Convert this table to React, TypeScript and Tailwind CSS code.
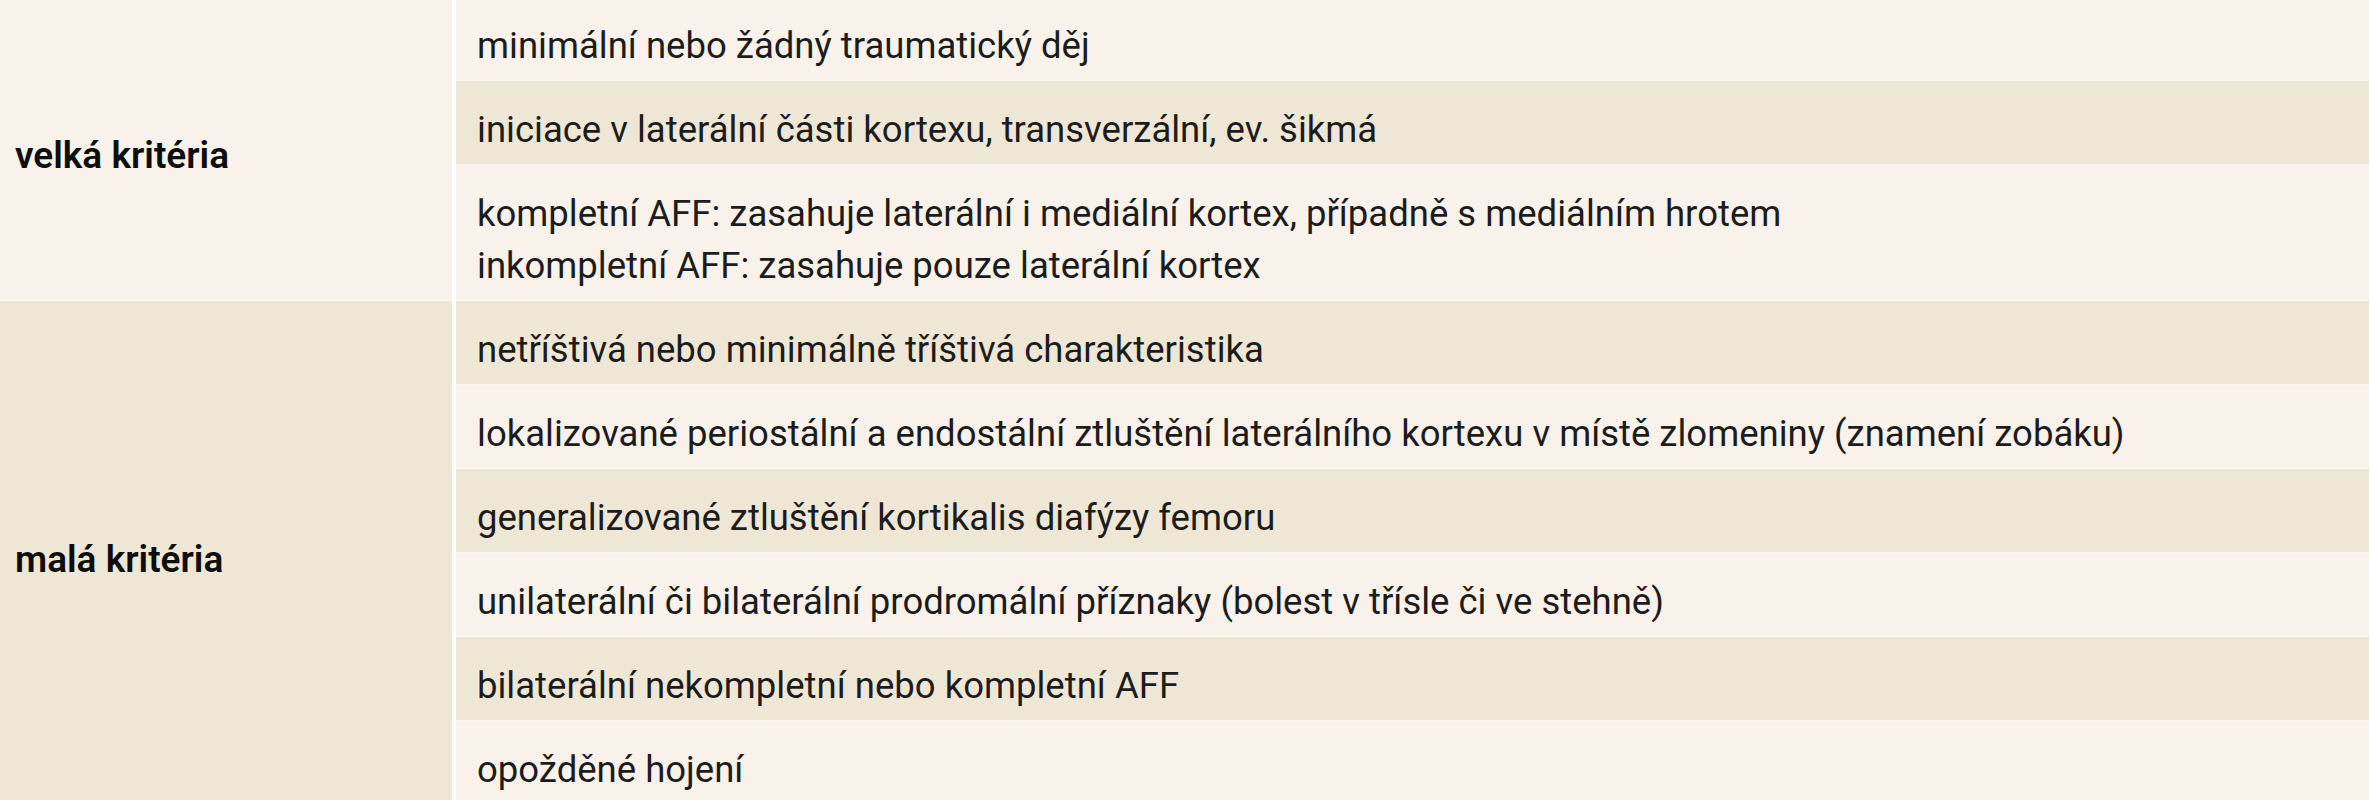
import React from "react";

const light = "bg-[#f8f2ea]";
const dark = "bg-[#efe7d6]";

function Row({ children, tone }: { children: React.ReactNode; tone: "l" | "d" }) {
  return (
    <div
      className={`${tone === "l" ? "bg-[#f8f2ea]" : "bg-[#efe7d6]"} pl-[21px] pr-6 pt-[24px] pb-[8px] leading-[52px] text-[36.5px] text-[#1c1c1c] shadow-[inset_0_1px_0_#fbf8f3]`}
    >
      {children}
    </div>
  );
}

function Group({
  label,
  tone,
  rows,
}: {
  label: string;
  tone: "l" | "d";
  rows: { text: React.ReactNode; tone: "l" | "d" }[];
}) {
  return (
    <div className="flex gap-x-1 bg-white">
      <div
        className={`${tone === "l" ? light : dark} w-[452px] shrink-0 flex items-center pl-[15px] pt-[24px] pb-[8px] leading-[52px] text-[37px] font-semibold text-[#0d0d0d] shadow-[inset_0_1px_0_#fbf8f3]`}
      >
        {label}
      </div>
      <div className="flex-1 flex flex-col">
        {rows.map((r, i) => (
          <Row key={i} tone={r.tone}>
            {r.text}
          </Row>
        ))}
      </div>
    </div>
  );
}

export default function App() {
  return (
    <div className="w-[2369px] h-[800px] overflow-hidden bg-white font-['Roboto','Liberation_Sans',sans-serif]">
      <div className="-mt-1 flex flex-col">
        <Group
          label="velká kritéria"
          tone="l"
          rows={[
            { text: "minimální nebo žádný traumatický děj", tone: "l" },
            { text: "iniciace v laterální části kortexu, transverzální, ev. šikmá", tone: "d" },
            {
              text: (
                <>
                  kompletní AFF: zasahuje laterální i mediální kortex, případně s mediálním hrotem
                  <br />
                  inkompletní AFF: zasahuje pouze laterální kortex
                </>
              ),
              tone: "l",
            },
          ]}
        />
        <Group
          label="malá kritéria"
          tone="d"
          rows={[
            { text: "netříštivá nebo minimálně tříštivá charakteristika", tone: "d" },
            {
              text: "lokalizované periostální a endostální ztluštění laterálního kortexu v místě zlomeniny (znamení zobáku)",
              tone: "l",
            },
            { text: "generalizované ztluštění kortikalis diafýzy femoru", tone: "d" },
            {
              text: "unilaterální či bilaterální prodromální příznaky (bolest v třísle či ve stehně)",
              tone: "l",
            },
            { text: "bilaterální nekompletní nebo kompletní AFF", tone: "d" },
            { text: "opožděné hojení", tone: "l" },
          ]}
        />
      </div>
    </div>
  );
}
